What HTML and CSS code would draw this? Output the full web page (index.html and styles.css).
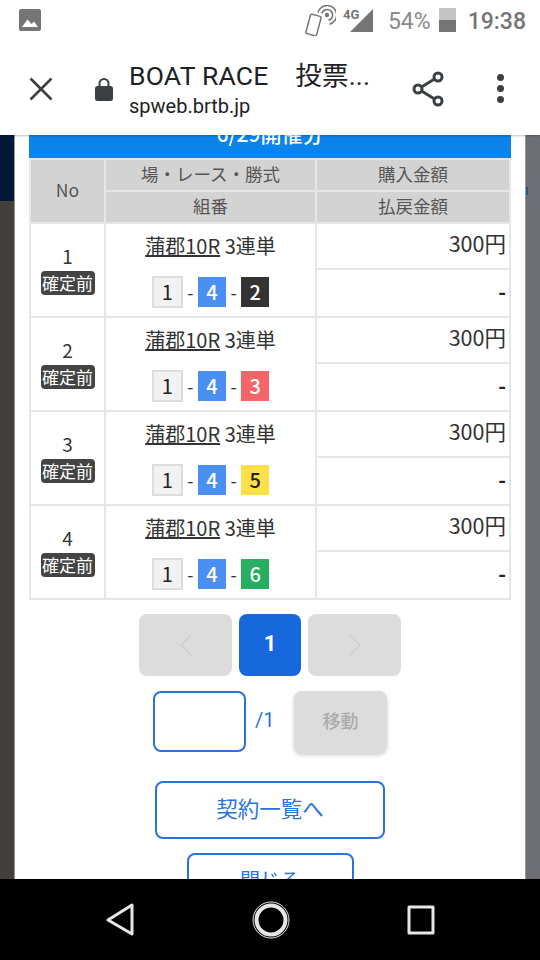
FILE: index.html
```html
<!DOCTYPE html>
<html lang="ja">
<head>
    <meta charset="UTF-8">
    <title>BOAT RACE 投票</title>
    <link rel="stylesheet" href="styles.css">
</head>
<body>
    <div class="statusbar">
        <svg class="gallery-icon" width="22" height="22" viewBox="0 0 22 22">
            <rect width="22" height="22" rx="2" fill="#757575"/>
            <path d="M3 18 L8.5 10.5 L12.5 15 L15 12.5 L19 18 Z" fill="#fff"/>
        </svg>
        <svg class="nfc-icon" width="31" height="31" viewBox="0 0 31 31" fill="none" stroke="#757575" stroke-width="1.5">
            <rect x="3" y="10" width="11" height="20" rx="1.5" transform="rotate(15 8.5 20)"/>
            <circle cx="22" cy="10" r="2.2" fill="#757575" stroke="none"/>
            <path d="M16.8 8.5 A5.5 5.5 0 1 1 23.5 15.3"/>
            <path d="M13 7.5 A9.5 9.5 0 1 1 24.5 19.2"/>
        </svg>
        <div class="signal">
            <span class="signal-label">4G</span>
            <svg width="23" height="23" viewBox="0 0 23 23"><path d="M0 23 L23 0 V23 Z" fill="#757575"/></svg>
        </div>
        <span class="battery-text">54%</span>
        <div class="battery"><div class="battery-fill"></div></div>
        <span class="clock">19:38</span>
    </div>

    <div class="toolbar">
        <svg class="close-icon" width="24" height="24" viewBox="0 0 24 24" fill="none" stroke="#3c4043" stroke-width="2.6">
            <path d="M1.5 1.5 L22.5 22.5 M22.5 1.5 L1.5 22.5"/>
        </svg>
        <svg class="lock-icon" width="18" height="24" viewBox="0 0 18 24">
            <path d="M4.5 10 V6.5 A4.5 4.5 0 0 1 13.5 6.5 V10" fill="none" stroke="#3c4043" stroke-width="2"/>
            <rect y="9" width="18" height="15" rx="2.5" fill="#3c4043"/>
        </svg>
        <div class="page-title">
            <div class="title-text">BOAT RACE　投票...</div>
            <div class="url-text">spweb.brtb.jp</div>
        </div>
        <svg class="share-icon" width="32" height="36" viewBox="0 0 32 36" fill="none" stroke="#3c4043" stroke-width="3">
            <circle cx="26" cy="6" r="4"/>
            <circle cx="6" cy="18" r="4"/>
            <circle cx="26" cy="30" r="4"/>
            <path d="M9.5 16 L22.5 8 M9.5 20 L22.5 28"/>
        </svg>
        <div class="more-icon"><span></span><span></span><span></span></div>
    </div>

    <div class="main">
        <div class="side-left"><div class="side-navy"></div><div class="side-dark"></div></div>
        <div class="modal">
            <div class="band">6/29開催分</div>
            <table class="bets">
                <colgroup><col class="col-no"><col class="col-race"><col class="col-money"></colgroup>
                <thead>
                    <tr><th rowspan="2">No</th><th>場・レース・勝式</th><th>購入金額</th></tr>
                    <tr><th>組番</th><th>払戻金額</th></tr>
                </thead>
                <tbody>
                    <tr>
                        <td rowspan="2" class="no-cell">1<span class="status-badge">確定前</span></td>
                        <td rowspan="2" class="race-cell">
                            <div class="race-name"><u>蒲郡10R</u> 3連単</div>
                            <div class="combo"><span class="boat boat-1">1</span>-<span class="boat boat-4">4</span>-<span class="boat boat-2">2</span></div>
                        </td>
                        <td class="money">300円</td>
                    </tr>
                    <tr><td class="dash">-</td></tr>
                    <tr>
                        <td rowspan="2" class="no-cell">2<span class="status-badge">確定前</span></td>
                        <td rowspan="2" class="race-cell">
                            <div class="race-name"><u>蒲郡10R</u> 3連単</div>
                            <div class="combo"><span class="boat boat-1">1</span>-<span class="boat boat-4">4</span>-<span class="boat boat-3">3</span></div>
                        </td>
                        <td class="money">300円</td>
                    </tr>
                    <tr><td class="dash">-</td></tr>
                    <tr>
                        <td rowspan="2" class="no-cell">3<span class="status-badge">確定前</span></td>
                        <td rowspan="2" class="race-cell">
                            <div class="race-name"><u>蒲郡10R</u> 3連単</div>
                            <div class="combo"><span class="boat boat-1">1</span>-<span class="boat boat-4">4</span>-<span class="boat boat-5">5</span></div>
                        </td>
                        <td class="money">300円</td>
                    </tr>
                    <tr><td class="dash">-</td></tr>
                    <tr>
                        <td rowspan="2" class="no-cell">4<span class="status-badge">確定前</span></td>
                        <td rowspan="2" class="race-cell">
                            <div class="race-name"><u>蒲郡10R</u> 3連単</div>
                            <div class="combo"><span class="boat boat-1">1</span>-<span class="boat boat-4">4</span>-<span class="boat boat-6">6</span></div>
                        </td>
                        <td class="money">300円</td>
                    </tr>
                    <tr><td class="dash">-</td></tr>
                </tbody>
            </table>

            <div class="pager">
                <div class="page-btn">
                    <svg width="14" height="22" viewBox="0 0 14 22" fill="none" stroke="#cfcfcf" stroke-width="1.6"><path d="M12 1 L2 11 L12 21"/></svg>
                </div>
                <div class="page-num">1</div>
                <div class="page-btn">
                    <svg width="14" height="22" viewBox="0 0 14 22" fill="none" stroke="#cfcfcf" stroke-width="1.6"><path d="M2 1 L12 11 L2 21"/></svg>
                </div>
            </div>

            <div class="jump">
                <input class="jump-input" type="text">
                <span class="jump-total">/1</span>
                <div class="jump-btn">移動</div>
            </div>

            <div class="link-btn link-list">契約一覧へ</div>
            <div class="link-btn link-close">閉じる</div>
        </div>
        <div class="side-right"><div class="scroll-dot"></div></div>
    </div>

    <div class="navbar">
        <svg width="30" height="34" viewBox="0 0 30 34" fill="none" stroke="#e6e6e6" stroke-width="3" stroke-linejoin="round">
            <path d="M27 2 V31 L3 17 Z"/>
        </svg>
        <svg width="38" height="38" viewBox="0 0 38 38" fill="none" stroke="#e6e6e6">
            <circle cx="19" cy="19" r="14.5" stroke-width="4"/>
            <circle cx="19" cy="19" r="18" stroke-width="1"/>
        </svg>
        <svg width="28" height="30" viewBox="0 0 28 30" fill="none" stroke="#e6e6e6" stroke-width="3" stroke-linejoin="round">
            <rect x="2" y="2" width="24" height="26"/>
        </svg>
    </div>
</body>
</html>
```

FILE: styles.css
```css
html, body {
    height: 100%;
}
body {
    margin: 0;
    width: 540px;
    height: 960px;
    display: flex;
    flex-direction: column;
    overflow: hidden;
    background-color: #fff;
    color: #333;
    font-family: 'Noto Sans CJK JP', Roboto, sans-serif;
}

/* status bar */
.statusbar {
    height: 40px;
    flex: none;
    display: flex;
    align-items: center;
    padding: 0 14px 0 19px;
    color: #757575;
    font-family: Roboto, sans-serif;
}
.gallery-icon {
    margin-right: auto;
}
.nfc-icon {
    margin-right: 14px;
    margin-top: 1px;
}
.signal {
    position: relative;
    width: 23px;
    height: 23px;
    margin-right: 15px;
    margin-top: 1px;
}
.signal-label {
    position: absolute;
    left: -7px;
    top: -2px;
    font-size: 13px;
    font-weight: 700;
}
.battery-text {
    font-size: 23px;
    color: #8a8a8a;
    margin-right: 8px;
    margin-top: 3px;
}
.battery {
    width: 17px;
    height: 24px;
    margin-right: 12px;
    background-color: #c4c4c4;
    border-radius: 1px;
    display: flex;
    align-items: flex-end;
}
.battery-fill {
    width: 100%;
    height: 12px;
    background-color: #757575;
}
.clock {
    font-size: 23px;
    font-weight: 500;
    margin-top: 3px;
}

/* browser toolbar */
.toolbar {
    height: 95px;
    flex: none;
    display: flex;
    align-items: center;
    padding: 0 36px 0 29px;
    position: relative;
    z-index: 1;
    background-color: #fff;
    box-shadow: 0 2px 2px -1px rgba(0,0,0,0.25);
}
.close-icon {
    margin-right: 42px;
    margin-top: 2px;
}
.lock-icon {
    margin-right: 16px;
    margin-top: 2px;
}
.page-title {
    flex: 1;
    margin-top: 2px;
    color: #202124;
    font-family: Roboto, 'Noto Sans CJK JP', sans-serif;
}
.title-text {
    font-size: 26.5px;
    letter-spacing: 0.2px;
    line-height: 34px;
    white-space: nowrap;
}
.url-text {
    font-size: 20px;
    line-height: 26px;
}
.share-icon {
    margin-right: 53px;
    margin-top: 2px;
}
.more-icon {
    display: flex;
    flex-direction: column;
    gap: 4px;
    margin-top: 2px;
}
.more-icon span {
    width: 7px;
    height: 7px;
    border-radius: 50%;
    background-color: #3c4043;
}

/* page behind the browser bars */
.main {
    flex: 1;
    min-height: 0;
    display: flex;
    overflow: hidden;
}
.side-left {
    width: 14px;
    flex: none;
    display: flex;
    flex-direction: column;
}
.side-navy {
    height: 66px;
    background-color: #04183a;
}
.side-dark {
    flex: 1;
    background-color: #423f3d;
}
.side-right {
    width: 14px;
    flex: none;
    background-color: #6d6e73;
}
.scroll-dot {
    width: 2px;
    height: 8px;
    margin-top: 52px;
    background-color: #2f4f9c;
}
.modal {
    flex: 1;
    min-width: 0;
    margin-top: -20px;
    padding: 0 14px;
    background-color: #fff;
    border-left: 1px solid #9a9a9a;
    border-right: 1px solid #9a9a9a;
}
.band {
    height: 43px;
    line-height: 36px;
    text-align: center;
    background-color: #0a84ea;
    color: #fff;
    font-size: 21px;
    font-weight: 500;
}

/* bet table */
.bets {
    width: 482px;
    border-collapse: collapse;
    table-layout: fixed;
}
.col-no {
    width: 75px;
}
.col-race {
    width: 211px;
}
.bets th, .bets td {
    border: 2px solid #e6e6e6;
    padding: 0;
}
.bets th {
    height: 26px;
    padding-bottom: 4px;
    background-color: #d3d3d3;
    color: #555;
    font-size: 17.5px;
    font-weight: 400;
}
.bets td {
    background-color: #fff;
}
.no-cell {
    text-align: center;
    font-size: 19px;
    line-height: 22px;
}
.status-badge {
    display: block;
    width: 54px;
    height: 24px;
    margin: 4px auto 0;
    background-color: #444;
    border-radius: 4px;
    color: #fff;
    font-size: 17px;
    line-height: 23px;
}
.bets td.race-cell {
    padding-top: 1px;
    text-align: center;
}
.race-name {
    font-size: 20px;
    line-height: 26px;
    margin-bottom: 17px;
}
.combo {
    display: flex;
    justify-content: center;
    align-items: center;
    gap: 4.5px;
    font-size: 18px;
}
.boat {
    width: 28px;
    height: 30px;
    line-height: 29px;
    font-size: 20px;
    font-weight: 500;
    color: #fff;
    text-align: center;
}
.boat-1 {
    width: 27px;
    height: 28px;
    line-height: 27px;
    background-color: #f2f2f2;
    border: 2px solid #ddd;
    color: #222;
    font-weight: 400;
}
.boat-2 {
    background-color: #333;
}
.boat-3 {
    background-color: #f56468;
}
.boat-4 {
    background-color: #4a90f2;
}
.boat-5 {
    background-color: #fde047;
    color: #222;
}
.boat-6 {
    background-color: #27ae60;
}
.bets td.money {
    height: 37px;
    padding: 0 3px 7px 0;
    text-align: right;
    font-size: 21.5px;
    line-height: 30px;
    color: #333;
}
.bets td.dash {
    height: 42px;
    padding: 0 3px 4px 0;
    text-align: right;
    font-weight: 700;
    font-size: 21px;
    color: #222;
}

/* pager */
.pager {
    display: flex;
    justify-content: center;
    gap: 7px;
    margin-top: 14px;
}
.page-btn {
    width: 93px;
    height: 62px;
    border-radius: 8px;
    background-color: #dcdcdc;
    display: flex;
    align-items: center;
    justify-content: center;
}
.page-num {
    width: 62px;
    height: 62px;
    line-height: 60px;
    border-radius: 8px;
    background-color: #1768dc;
    color: #fff;
    font-family: Roboto, sans-serif;
    font-size: 22px;
    font-weight: 700;
    text-align: center;
}
.jump {
    display: flex;
    align-items: flex-start;
    justify-content: center;
    margin-top: 15px;
}
.jump-input {
    width: 93px;
    height: 61px;
    box-sizing: border-box;
    padding: 0;
    border: 2px solid #2a72dc;
    border-radius: 8px;
    background-color: #fff;
}
.jump-total {
    width: 48px;
    padding-left: 9px;
    box-sizing: border-box;
    color: #2a72dc;
    font-size: 20px;
    line-height: 58px;
    font-family: Roboto, sans-serif;
}
.jump-btn {
    width: 93px;
    height: 62px;
    line-height: 58px;
    border-radius: 8px;
    background-color: #dcdcdc;
    box-shadow: 0 2px 4px rgba(0,0,0,0.2);
    color: #aaa;
    font-size: 18px;
    font-weight: 500;
    text-align: center;
}
.link-btn {
    margin: 0 auto;
    box-sizing: border-box;
    border: 2px solid #2a72dc;
    border-radius: 8px;
    color: #2a72dc;
    text-align: center;
}
.link-list {
    width: 230px;
    height: 58px;
    line-height: 49px;
    margin-top: 28px;
    font-size: 21.5px;
}
.link-close {
    width: 167px;
    height: 58px;
    line-height: 50px;
    margin-top: 14px;
    font-size: 20px;
}

/* android nav */
.navbar {
    height: 81px;
    flex: none;
    background-color: #000;
    display: flex;
    align-items: center;
    gap: 117px;
    padding-left: 105px;
}
```
